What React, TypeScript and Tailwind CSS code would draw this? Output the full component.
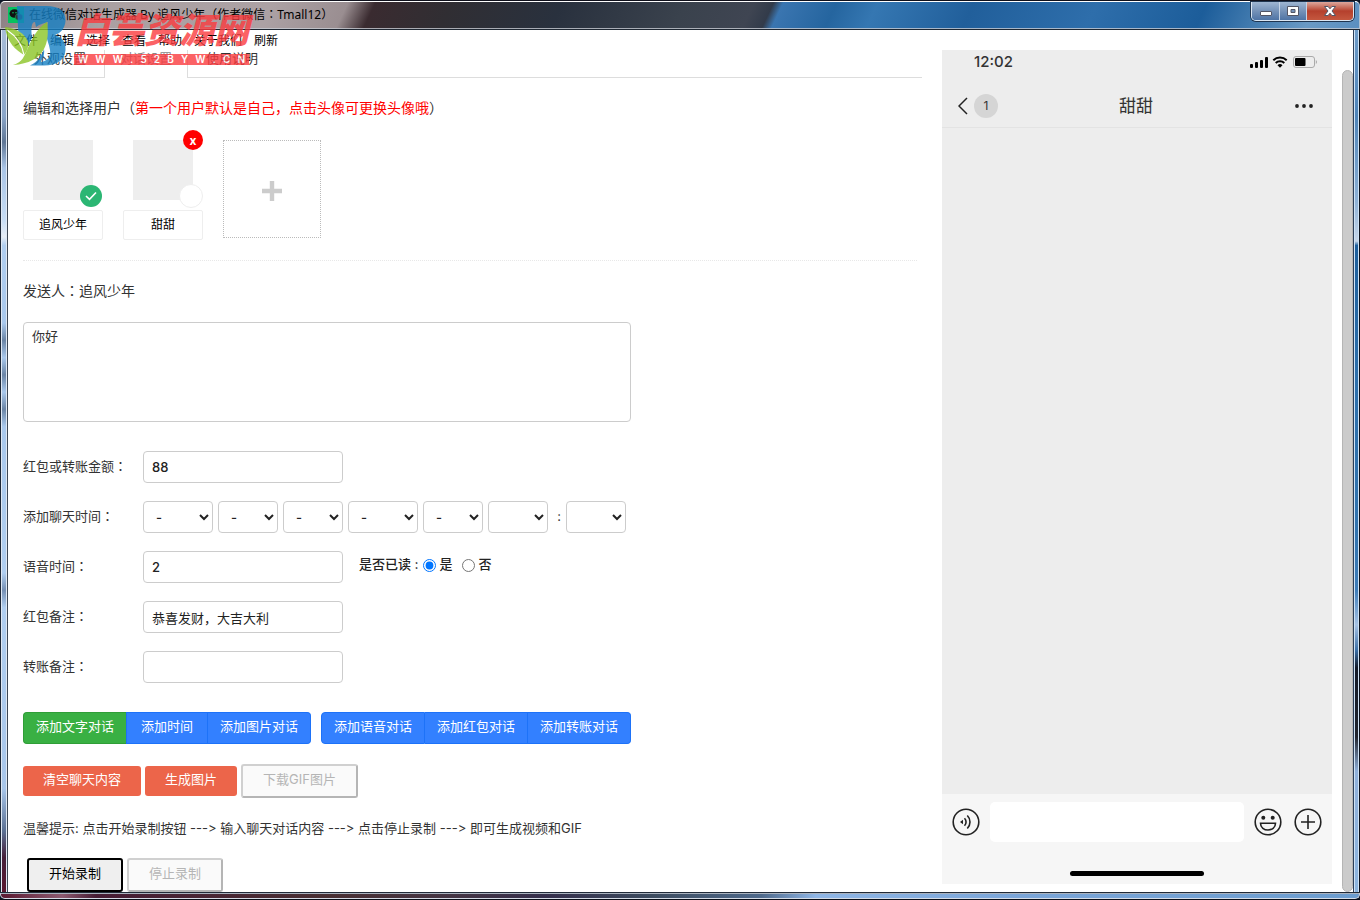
import { useState, type ReactNode } from "react";

const MENU = ["文件", "编辑", "选择", "查看", "帮助", "关于我们", "刷新"];

const TIME_FIELDS = [
  { name: "年", wide: true, text: "-" },
  { name: "月", wide: false, text: "-" },
  { name: "日", wide: false, text: "-" },
  { name: "时段", wide: true, text: "-" },
  { name: "星期", wide: false, text: "-" },
  { name: "时", wide: false, text: "" },
];

const FIELD = "h-8 rounded border border-[#ccc] bg-white text-[13px] text-[#222] font-medium outline-none";

// Full-width punctuation set in the middle of its cell.
function Mark({ children }: { children: ReactNode }) {
  return <span className="font-['Noto_Sans_CJK_TC',sans-serif] leading-none">{children}</span>;
}

function WindowButtons() {
  return (
    <div className="flex h-[19px] self-start overflow-hidden rounded-b-[5px] border border-t-0 border-[#dbe6f2] text-white shadow-[0_0_0_1px_#1f3550]">
      <button aria-label="最小化" className="flex w-7 items-center justify-center border-r border-[#c6d4e6] bg-gradient-to-b from-[#9fb6d2] via-[#7592b8] via-50% to-[#4f74a5]">
        <svg width="14" height="12" viewBox="0 0 14 12">
          <rect x="1.5" y="6.5" width="11" height="4" rx="0.5" fill="#fff" stroke="#535666" />
        </svg>
      </button>
      <button aria-label="最大化" className="flex w-[27px] items-center justify-center border-r border-[#c6d4e6] bg-gradient-to-b from-[#9fb6d2] via-[#7592b8] via-50% to-[#4f74a5]">
        <svg width="14" height="12" viewBox="0 0 14 12">
          <path fillRule="evenodd" d="M1.500 1.500h11v9h-11zM5 4.500h4v3H5z" fill="#fff" stroke="#535666" />
        </svg>
      </button>
      <button aria-label="关闭" className="flex w-[46px] items-center justify-center bg-gradient-to-b from-[#dba79d] via-[#b5402d] via-50% to-[#c4573f]">
        <svg width="14" height="12" viewBox="0 0 14 12">
          <path d="M1.500 1.500h3.600L7 3.800l1.900-2.300h3.600L9 6l3.500 4.500H8.900L7 8.200 5.100 10.500H1.500L5 6z" fill="#fff" stroke="#535666" />
        </svg>
      </button>
    </div>
  );
}

function Watermark() {
  return (
    <div className="pointer-events-none absolute top-[5px] left-1 flex gap-[6px] opacity-80">
      <svg width="64" height="64" viewBox="0 0 64 64">
        <path
          fill="#1680c4"
          d="M13 1H42C55 1 62 6 61.500 16C61 23 57 28 51 30C58 32 62 37 61.500 45C61 55 53 60.500 40 60.500H26C34 57 38 50 40 44C41 50 38 54 37 57C44 56 47 51 46 45C45 39 43 35 42 30L44 17C41 18 36 19 32 22L31 17C27 17 27 24 28 33L23 42C17 36 14 30 14 22Z"
        />
        <path fill="#8cc526" d="M1 22C11 23 21 28 24 37C25 42 23 46 20 50C12 45 3 38 1 22Z" />
        <path fill="#8cc526" d="M43 17C46 36 42 58 9 60C19 57 20 51 23 45C27 36 32 24 43 17Z" />
        <path fill="none" stroke="#fff" strokeWidth="1.200" d="M3 25C12 31 18 38 20 50" />
      </svg>
      <div className="flex flex-col items-stretch">
        <div className="h-[49px] text-[35px] leading-[50px] font-black text-[#fb3b3f] italic">白芸资源网</div>
        <div className="flex h-[11px] items-center justify-between bg-[#fb3b3f] px-1 text-[10px] leading-[11px] font-semibold text-white">
          {"WWW.52BYW.CN".split("").map((c, i) => (
            <span key={i}>{c}</span>
          ))}
        </div>
      </div>
    </div>
  );
}

function TitleBar() {
  return (
    <header className="flex h-[30px] items-stretch rounded-t-md border-t border-b border-t-[#10111c] border-b-[#1f2833] bg-[linear-gradient(115deg,#8b8083_0%,#aaa0a2_8%,#aca1a4_20%,#9a8e91_25.400%,#3a2b30_27.400%,#302e33_33%,#29313e_41%,#3a424d_50%,#3f4552_55%,#323b4a_56.400%,#3a75b0_57.100%,#25659f_61%,#3577b2_64%,#215f9b_71%,#2e6eab_80%,#1c5d9a_88%,#6a9ac5_96%,#5b8fc0_100%)]">
      <div className="flex flex-1 justify-between rounded-t-[5px] border-x border-t border-b border-[#c8ccd4]/80 border-t-white pr-[5px] pl-[7px]">
        <div className="flex items-center gap-[5px]">
          <svg width="16" height="16" viewBox="0 0 16 16" className="shrink-0">
            <rect width="16" height="16" fill="#07c160" />
            <ellipse cx="6.500" cy="6.500" rx="5" ry="4.300" fill="#111" />
            <ellipse cx="11" cy="10" rx="3.800" ry="3.300" fill="#333" stroke="#07c160" strokeWidth="0.500" />
            <circle cx="5" cy="5.800" r="0.800" fill="#07c160" />
            <circle cx="8" cy="5.800" r="0.800" fill="#07c160" />
          </svg>
          <h1 className="font-['Noto_Sans','Noto_Sans_CJK_SC',sans-serif] text-[12px] leading-5 whitespace-nowrap text-black">
            在线微信对话生成器 By 追风少年（作者微信<Mark>：</Mark>Tmall12）
          </h1>
        </div>
        <WindowButtons />
      </div>
    </header>
  );
}

function Row({ label, id, children }: { label: string; id: string; children: ReactNode }) {
  return (
    <div className="flex h-8 items-center">
      <label htmlFor={id} className="w-[120px] shrink-0 pb-[2px] text-[13px] leading-5">
        {label}
        <Mark>：</Mark>
      </label>
      {children}
    </div>
  );
}

const NAME_BOX = "mt-[10px] block h-[30px] w-full rounded-xs border border-[#eee] pb-[3px] text-center text-[12px] text-black outline-none";

function Users() {
  return (
    <div className="mt-[22px] flex gap-5">
      <div className="relative w-20">
        <button aria-label="更换头像" className="mx-auto block size-[60px] bg-[#eee]" />
        <span className="absolute top-[45px] right-px flex size-[22px] items-center justify-center rounded-full bg-[#2bb673]">
          <svg width="12" height="10" viewBox="0 0 12 10" fill="none" stroke="#fff" strokeWidth="1.600">
            <path d="M1 5l3.500 3.300L11 1.500" />
          </svg>
        </span>
        <input aria-label="用户一" defaultValue="追风少年" className={NAME_BOX} />
      </div>
      <div className="relative w-20">
        <button aria-label="更换头像" className="mx-auto block size-[60px] bg-[#eee]" />
        <button className="absolute -top-[10px] right-0 size-5 rounded-full bg-[#f00] text-[12px] leading-[19px] font-bold text-white">x</button>
        <span className="absolute top-11 right-0 size-6 rounded-full border border-[#eee] bg-white" />
        <input aria-label="用户二" defaultValue="甜甜" className={NAME_BOX} />
      </div>
      <button aria-label="添加用户" className="flex size-[98px] items-center justify-center border border-dotted border-[#bbb] pt-1">
        <svg width="20" height="20" viewBox="0 0 20 20" fill="none" stroke="#ccc" strokeWidth="4.400">
          <path d="M10 0v20M0 10h20" />
        </svg>
      </button>
    </div>
  );
}

function Editor() {
  const [read, setRead] = useState(true);
  const blue = "h-8 border border-l-0 border-[#1d72f8] bg-[#3380ff] pb-[2px]";
  return (
    <main className="min-w-0 flex-1 pl-[10px]">
      <nav className="flex h-7 text-[13px] leading-4">
        <a href="#look" className="border-r border-b border-[#ddd] pr-[18px] pl-4">外观设置</a>
        <a href="#chat" className="px-[15px] text-[#888]">对话设置</a>
        <a href="#help" className="flex-1 border-b border-l border-[#ddd] px-[18px]">使用说明</a>
      </nav>
      <div className="px-[5px]">
        <h2 className="mt-5 h-5 text-[14px] leading-5">
          编辑和选择用户（<span className="text-[#f00]">第一个用户默认是自己，点击头像可更换头像哦</span>）
        </h2>
        <Users />
        <hr className="mt-5 border-t border-dotted border-[#e8e8e8]" />
        <label htmlFor="message" className="mt-5 block h-5 text-[14px] leading-5">
          发送人<Mark>：</Mark>追风少年
        </label>
        <textarea id="message" defaultValue="你好" className="mt-[21px] block h-[100px] w-full max-w-[608px] resize-none rounded border border-[#ccc] px-2 py-[3px] text-[13px] leading-5 outline-none" />

        <div className="mt-[29px] flex flex-col gap-[18px]">
          <Row label="红包或转账金额" id="amount">
            <input id="amount" defaultValue="88" className={`${FIELD} w-[200px] px-2`} />
          </Row>
          <Row label="添加聊天时间" id="time0">
            <div className="flex items-center gap-[5px]">
              {TIME_FIELDS.map((f, i) => (
                <select key={f.name} id={`time${i}`} aria-label={f.name} className={`${FIELD} px-2 ${f.wide ? "w-[70px]" : "w-[60px]"}`}>
                  <option>{f.text}</option>
                </select>
              ))}
              <span className="w-2 text-right text-[13px]">:</span>
              <select aria-label="分" className={`${FIELD} w-[60px] px-2`}>
                <option></option>
              </select>
            </div>
          </Row>
          <Row label="语音时间" id="voice">
            <input id="voice" defaultValue="2" className={`${FIELD} w-[200px] px-2`} />
            <fieldset className="mb-1 ml-4 flex items-center text-[13px] font-medium text-[#222]">
              <span className="mr-[5px]">是否已读 :</span>
              <input id="yes" type="radio" name="read" checked={read} onChange={() => setRead(true)} className="size-[13px]" />
              <label htmlFor="yes" className="mr-[10px] ml-[3px]">是</label>
              <input id="no" type="radio" name="read" checked={!read} onChange={() => setRead(false)} className="size-[13px]" />
              <label htmlFor="no" className="ml-[3px]">否</label>
            </fieldset>
          </Row>
          <Row label="红包备注" id="packet">
            <input id="packet" defaultValue="恭喜发财，大吉大利" className={`${FIELD} w-[200px] px-2 font-normal`} />
          </Row>
          <Row label="转账备注" id="transfer">
            <input id="transfer" defaultValue="" className={`${FIELD} w-[200px] px-2`} />
          </Row>
        </div>

        <div className="mt-[29px] flex gap-[10px] text-[13px] text-white">
          <div className="flex">
            <button className="h-8 rounded-l border border-r-0 border-[#2f9e37] bg-[#39b043] px-3 pb-[2px]">添加文字对话</button>
            <button className="h-8 border border-[#1d72f8] bg-[#3380ff] px-[14px] pb-[2px]">添加时间</button>
            <button className={`${blue} rounded-r px-3`}>添加图片对话</button>
          </div>
          <div className="flex">
            <button className="h-8 rounded-l border border-[#1d72f8] bg-[#3380ff] px-3 pb-[2px]">添加语音对话</button>
            <button className={`${blue} px-3`}>添加红包对话</button>
            <button className={`${blue} rounded-r px-3`}>添加转账对话</button>
          </div>
        </div>

        <div className="mt-5 flex h-[34px] items-center gap-1 text-[13px]">
          <button className="h-[30px] rounded-[3px] bg-[#ec654a] px-5 pb-[2px] text-white">清空聊天内容</button>
          <button className="h-[30px] rounded-[3px] bg-[#ec654a] px-5 pb-[2px] text-white">生成图片</button>
          <button disabled className="h-[34px] rounded-[3px] border-2 border-[#d0d0d0] border-r-[#b5b5b5] border-b-[#b5b5b5] bg-[#fafafa] px-5 pb-[2px] text-[#b5b5b5]">下载GIF图片</button>
        </div>

        <p className="my-5 h-5 text-[13px] leading-5 [font-feature-settings:'calt'_0]">
          温馨提示: 点击开始录制按钮 ---&gt; 输入聊天对话内容 ---&gt; 点击停止录制 ---&gt; 即可生成视频和GIF
        </p>

        <div className="flex gap-1 pl-1 text-[13px]">
          <button className="h-[34px] rounded-[3px] border-2 border-black bg-[#efefef] px-5 pb-[2px] text-black">开始录制</button>
          <button disabled className="h-[34px] rounded-[3px] border-2 border-[#d0d0d0] border-r-[#b5b5b5] border-b-[#b5b5b5] bg-[#fafafa] px-5 pb-[2px] text-[#b5b5b5]">停止录制</button>
        </div>
      </div>
    </main>
  );
}

function Phone() {
  return (
    <aside className="mb-2 flex w-[390px] shrink-0 flex-col bg-[#ededed] text-[#333]">
      <div className="flex h-6 items-center justify-between pr-[15px] pl-8">
        <span className="text-[15px] font-medium">12:02</span>
        <svg width="67" height="14" viewBox="0 0 67 14" fill="#000">
          <rect x="0" y="9" width="3" height="4" rx="1" />
          <rect x="5" y="7" width="3" height="6" rx="1" />
          <rect x="10" y="5" width="3" height="8" rx="1" />
          <rect x="15" y="2" width="3" height="11" rx="1" />
          <path d="M23.300 5.200a9.800 9.800 0 0 1 13.400 0M25.700 8a6.200 6.200 0 0 1 8.600 0" fill="none" stroke="#000" strokeWidth="2" />
          <path d="M27.500 10.200a3.800 3.800 0 0 1 5 0L30 12.800z" />
          <rect x="43.500" y="1.500" width="21" height="11" rx="2.500" fill="none" stroke="#aaa" />
          <rect x="45" y="3" width="10.500" height="8" rx="1" />
          <path d="M65.800 5v4q1.200-.5 1.200-2t-1.200-2" fill="#aaa" />
        </svg>
      </div>
      <div className="mt-[10px] grid h-11 grid-cols-3 items-center border-b border-[#e3e3e3] pr-[18px] pl-4">
        <div className="flex items-center gap-[6px]">
          <svg width="10" height="18" viewBox="0 0 10 18" fill="none" stroke="#222" strokeWidth="1.500">
            <path d="M9 1L1 9l8 8" />
          </svg>
          <span className="flex size-6 items-center justify-center rounded-full bg-[#d5d5d5] text-[12px]">1</span>
        </div>
        <h2 className="text-center text-[17px] leading-6">甜甜</h2>
        <button aria-label="更多" className="justify-self-end">
          <svg width="20" height="6" viewBox="0 0 20 6" fill="#222">
            <circle cx="3" cy="3" r="1.900" />
            <circle cx="10" cy="3" r="1.900" />
            <circle cx="17" cy="3" r="1.900" />
          </svg>
        </button>
      </div>
      <div className="flex-1" />
      <div className="flex h-[90px] flex-col justify-between bg-[#f6f6f6] px-[10px] py-2">
        <div className="flex items-center">
          <button aria-label="语音">
            <svg width="28" height="28" viewBox="0 0 28 28" fill="none" stroke="#222" strokeWidth="1.600">
              <circle cx="14" cy="14" r="12.800" />
              <path d="M8 14l3-2.200v4.400z" fill="#222" stroke="none" />
              <path d="M12.500 10.200a5.400 5.400 0 0 1 0 7.600M15.300 7.500a9.200 9.200 0 0 1 0 13" />
            </svg>
          </button>
          <input aria-label="消息" className="mx-[10px] h-10 min-w-0 flex-1 rounded-[5px] bg-white px-2 outline-none" />
          <div className="flex gap-3">
            <button aria-label="表情">
              <svg width="28" height="28" viewBox="0 0 28 28" fill="none" stroke="#222" strokeWidth="1.600">
                <circle cx="14" cy="14" r="12.800" />
                <circle cx="9.300" cy="9.800" r="2" fill="#222" stroke="none" />
                <circle cx="18.700" cy="9.800" r="2" fill="#222" stroke="none" />
                <path d="M6.500 15.200h15c0 9-15 9-15 0z" />
              </svg>
            </button>
            <button aria-label="添加">
              <svg width="28" height="28" viewBox="0 0 28 28" fill="none" stroke="#222" strokeWidth="1.600">
                <circle cx="14" cy="14" r="12.800" />
                <path d="M14 7v14M7 14h14" />
              </svg>
            </button>
          </div>
        </div>
        <div className="h-[5px] w-[134px] self-center rounded-full bg-black" />
      </div>
    </aside>
  );
}

export default function App() {
  return (
    <div className="relative flex min-h-screen flex-col bg-[#0d1626] font-[Inter,'Noto_Sans_CJK_SC',sans-serif] text-[#333]">
      <TitleBar />
      <div className="flex flex-1">
        <div className="flex w-2 shrink-0 border-r border-l border-[#1c2636] border-r-[#3c4654]">
          <div className="flex-1 border-x border-[#dfe8f3] bg-[linear-gradient(180deg,#a8bcd8_0,#8aa5c8_10%,#5f7695_13%,#a9c4e6_16%,#c6dcf4_22%,#e6edf6_24%,#b0cef0_25%,#a9c8ec_34%,#6b85a6_36%,#a9c8ec_38%,#6b85a6_40%,#a9c8ec_42%,#6b85a6_44%,#a9c8ec_46%,#b0cef0_63%,#7690b4_65%,#b0cef0_67%,#a8c6ea_88%,#5a6f92_93%,#46203a_96%,#5a1830_100%)]" />
        </div>
        <div className="min-w-0 flex-1 bg-white">
          <nav className="flex h-5 gap-3 pl-[6px] text-[12px] leading-[22px] text-black">
            {MENU.map((m) => (
              <button key={m}>{m}</button>
            ))}
          </nav>
          <div className="flex">
            <Editor />
            <div className="w-5 shrink-0" />
            <Phone />
            <div className="mt-5 ml-[10px] w-[11px] shrink-0 rounded-full border border-[#b5b5b5] bg-[#cbcbcb]" />
          </div>
        </div>
        <div className="flex w-[7px] shrink-0 border-r border-l border-[#2c3f59] border-r-[#0b111c]">
          <div className="flex-1 border-x border-[#cfe2f5] bg-[linear-gradient(180deg,#6d9bc8_0,#4d83b8_10%,#8fb2d6_20%,#c5d5e8_24.500%,#1d5f9c_25%,#2c6fab_40%,#3173ae_58%,#3d7cb8_65%,#a6c2e4_69%,#3a6ea5_72%,#131a28_74%,#20242e_82%,#8fb0da_86%,#8cb4de_100%)]" />
        </div>
      </div>
      <footer className="flex h-2 border-t border-b border-t-[#202a38] border-b-[#0a0f18]">
        <div className="flex-1 rounded-b-[5px] border border-[#d4dbe6] border-t-[#a9b2be] bg-[linear-gradient(90deg,#5a1830_0,#8d5a70_4.500%,#471c34_7%,#4a3034_24%,#453544_33%,#352f4c_40%,#3d4c60_48%,#4f6a8c_56%,#8fb6e6_60%,#7aa5d8_75%,#6c9dcf_100%)]" />
      </footer>
      <Watermark />
    </div>
  );
}
